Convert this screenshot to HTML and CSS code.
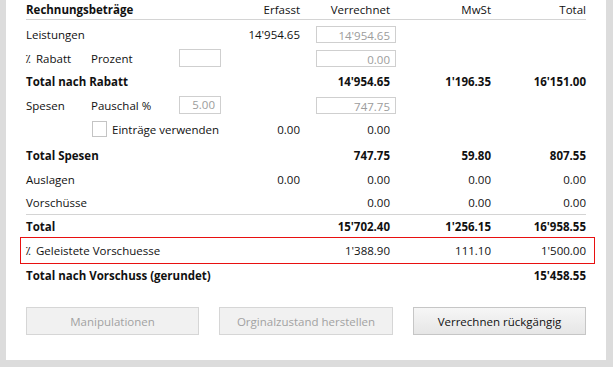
FILE: index.html
```html
<!DOCTYPE html>
<html lang="de">
<head>
  <meta charset="UTF-8">
  <title>Rechnungsbeträge</title>
  <link rel="stylesheet" href="styles.css">
</head>
<body>
  <div class="panel">
    <div class="row head">
      <div class="bold">Rechnungsbeträge</div>
      <div class="num">Erfasst</div>
      <div class="num pad">Verrechnet</div>
      <div class="num">MwSt</div>
      <div class="num">Total</div>
    </div>

    <div class="row first">
      <div>Leistungen</div>
      <div class="num">14'954.65</div>
      <div class="field">14'954.65</div>
      <div></div>
      <div></div>
    </div>

    <div class="row">
      <div class="sub">
        <span class="key"><span class="minus">⁒</span>Rabatt</span>
        <span class="mid">Prozent</span>
        <span class="box"></span>
      </div>
      <div></div>
      <div class="field">0.00</div>
      <div></div>
      <div></div>
    </div>

    <div class="row bold short">
      <div>Total nach Rabatt</div>
      <div></div>
      <div class="num pad">14'954.65</div>
      <div class="num">1'196.35</div>
      <div class="num">16'151.00</div>
    </div>

    <div class="row">
      <div class="sub">
        <span class="key">Spesen</span>
        <span class="mid">Pauschal %</span>
        <span class="box">5.00</span>
      </div>
      <div></div>
      <div class="field">747.75</div>
      <div></div>
      <div></div>
    </div>

    <div class="row">
      <div class="sub">
        <span class="check"></span>
        <span>Einträge verwenden</span>
      </div>
      <div class="num">0.00</div>
      <div class="num pad">0.00</div>
      <div></div>
      <div></div>
    </div>

    <div class="row bold spaced">
      <div>Total Spesen</div>
      <div></div>
      <div class="num pad">747.75</div>
      <div class="num">59.80</div>
      <div class="num">807.55</div>
    </div>

    <div class="row">
      <div>Auslagen</div>
      <div class="num">0.00</div>
      <div class="num pad">0.00</div>
      <div class="num">0.00</div>
      <div class="num">0.00</div>
    </div>

    <div class="row ruled">
      <div>Vorschüsse</div>
      <div></div>
      <div class="num pad">0.00</div>
      <div class="num">0.00</div>
      <div class="num">0.00</div>
    </div>

    <div class="row bold total">
      <div>Total</div>
      <div></div>
      <div class="num pad">15'702.40</div>
      <div class="num">1'256.15</div>
      <div class="num">16'958.55</div>
    </div>

    <div class="row marked">
      <div><span class="minus">⁒</span>Geleistete Vorschuesse</div>
      <div></div>
      <div class="num pad">1'388.90</div>
      <div class="num">111.10</div>
      <div class="num">1'500.00</div>
    </div>

    <div class="row bold total">
      <div class="wide">Total nach Vorschuss (gerundet)</div>
      <div></div>
      <div class="num">15'458.55</div>
    </div>

    <div class="buttons">
      <button disabled>Manipulationen</button>
      <button disabled>Orginalzustand herstellen</button>
      <button>Verrechnen rückgängig</button>
    </div>
  </div>
</body>
</html>
```

FILE: styles.css
```css
body {
  margin: 0;
  background: #dcdcdc;
  font-family: "Open Sans", "Noto Sans", sans-serif;
  font-size: 11.5px;
  color: #111;
}
.panel {
  width: 560px;
  height: 360px;
  margin-left: 6px;
  padding: 0 20px;
  background: #fff;
  box-sizing: content-box;
}
.row {
  display: grid;
  grid-template-columns: 195px 79px 96px 95px 95px;
  align-items: center;
  height: 24px;
  white-space: nowrap;
}
.head {
  height: 19px;
  border-bottom: 1px solid #d4d4d4;
}
.first {
  margin-top: 2px;
}
.short {
  height: 23px;
}
.bold {
  font-weight: bold;
}
.num {
  text-align: right;
}
.pad {
  padding-right: 6px;
}
.minus {
  display: inline-block;
  width: 10px;
}
.field {
  justify-self: end;
  width: 80px;
  height: 17px;
  line-height: 17px;
  box-sizing: border-box;
  border: 1px solid #cfcfcf;
  padding-right: 5px;
  text-align: right;
  color: #9c9c9c;
}
.sub {
  display: flex;
  align-items: center;
}
.key {
  width: 65px;
}
.mid {
  width: 88px;
}
.box {
  width: 42px;
  height: 18px;
  line-height: 16px;
  box-sizing: border-box;
  border: 1px solid #cfcfcf;
  padding-right: 5px;
  text-align: right;
  color: #9c9c9c;
}
.check {
  width: 15px;
  height: 16px;
  box-sizing: border-box;
  border: 1px solid #c4c4c4;
  margin-left: 66px;
  margin-right: 5px;
}
.spaced {
  margin-top: 2px;
}
.ruled {
  height: 23px;
  border-bottom: 1px solid #d4d4d4;
}
.total {
  height: 22px;
}
.marked {
  height: 27px;
  box-sizing: border-box;
  margin: 0 -9px 0 -6px;
  padding: 0 8px 0 5px;
  border: 1px solid #e81010;
}
.wide {
  grid-column: 1 / 4;
}
.buttons {
  display: grid;
  grid-template-columns: 173px 174px 173px;
  gap: 20px;
  margin-top: 21px;
}
.buttons button {
  height: 28px;
  font: inherit;
  color: #111;
  background: linear-gradient(#f6f6f6, #e6e6e6);
  border: 1px solid #c6c6c6;
  padding: 0;
}
.buttons button:disabled {
  color: #a2a2a2;
  background: #f1f1f1;
  border-color: #d6d6d6;
}
```
